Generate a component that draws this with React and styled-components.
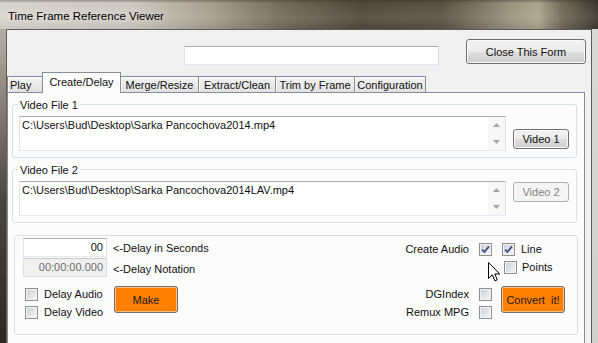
import React from "react";
import styled, { createGlobalStyle } from "styled-components";

const GlobalStyle = createGlobalStyle`
  html, body {
    margin: 0;
    padding: 0;
    background: #2a2622;
  }
  body {
    font-family: "Liberation Sans", Arial, sans-serif;
    font-size: 11px;
    color: #111;
  }
`;

const Frame = styled.div`
  width: 598px;
  height: 343px;
  overflow: hidden;
  display: flex;
  flex-direction: column;
  background: linear-gradient(to bottom, #dadad8, #cfcfcd) right top / 6px 100%
      no-repeat,
    linear-gradient(to bottom, #c4c0b8 0%, #8e867a 28%, #4d463d 58%, #2b2723 100%);
`;

const TitleBar = styled.div`
  flex: none;
  box-sizing: border-box;
  height: 29px;
  padding: 3px 0 0 8px;
  display: flex;
  align-items: center;
  font-size: 11.5px;
  color: #000;
  text-shadow: 0 0 6px rgba(255, 255, 255, 0.7);
  background: linear-gradient(
      to bottom,
      rgba(40, 34, 28, 0.35) 0px,
      rgba(255, 255, 255, 0) 3px,
      rgba(255, 255, 255, 0.08) 60%,
      rgba(0, 0, 0, 0.05) 100%
    ),
    linear-gradient(
      90deg,
      #d7d4ce 0%,
      #cdc8c0 22%,
      #a79e8f 35%,
      #746a5a 47%,
      #51483b 60%,
      #5a5143 74%,
      #9c9580 86%,
      #aaa38d 90%,
      #706856 94%,
      #3e3730 100%
    );
`;

const Client = styled.div`
  flex: 1;
  margin: 0 6px;
  background: #f0f0f0;
  border: 1px solid #5c5c5c;
  border-bottom: none;
  overflow: hidden;
  display: flex;
  flex-direction: column;
`;

const TopRow = styled.div`
  flex: none;
  height: 42px;
  display: flex;
  align-items: flex-start;
`;

const SearchBox = styled.div`
  box-sizing: border-box;
  width: 255px;
  height: 19px;
  margin: 16px 0 0 177px;
  background: #fff;
  border: 1px solid;
  border-color: #abadb3 #dbdfe6 #e3e9ef #e2e3ea;
`;

const Button = styled.button`
  box-sizing: border-box;
  flex: none;
  padding: 0;
  font-family: "Liberation Sans", Arial, sans-serif;
  font-size: 11px;
  color: #111;
  border: 1px solid #707070;
  border-radius: 3px;
  background: linear-gradient(
    to bottom,
    #f2f2f2 0%,
    #ebebeb 50%,
    #dddddd 51%,
    #cfcfcf 100%
  );
  box-shadow: inset 0 0 0 1px #fbfbfb;
`;

const CloseButton = styled(Button)`
  width: 120px;
  height: 25px;
  margin: 9px 0 0 27px;
`;

const VideoButton = styled(Button)`
  width: 56px;
  height: 20px;
  margin: ${(p) => p.$mt}px 0 0 7px;

  &:disabled {
    color: #838383;
    border-color: #adb2b5;
    background: #f4f4f4;
    box-shadow: none;
  }
`;

const OrangeButton = styled(Button)`
  width: 64px;
  height: 27px;
  margin: 1px 0 0 ${(p) => p.$ml || 0}px;
  white-space: pre;
  color: #1a1a1a;
  background: #ff8000;
  box-shadow: inset 0 0 0 1px #ffbd80;
`;

const TabStrip = styled.div`
  flex: none;
  height: 20px;
  display: flex;
  align-items: flex-end;
`;

const Tab = styled.div`
  box-sizing: border-box;
  width: ${(p) => p.$w}px;
  height: ${(p) => (p.$active ? 21 : 16)}px;
  margin-left: ${(p) => (p.$first ? 0 : -1)}px;
  margin-bottom: ${(p) => (p.$active ? -1 : 0)}px;
  padding: ${(p) => (p.$active ? "0 0 2px 0" : "0")};
  padding-left: ${(p) => (p.$left ? "2px" : "0")};
  position: relative;
  z-index: ${(p) => (p.$active ? 2 : 1)};
  display: flex;
  align-items: center;
  justify-content: ${(p) => (p.$left ? "flex-start" : "center")};
  white-space: nowrap;
  border: 1px solid #898c95;
  border-bottom: none;
  background: ${(p) =>
    p.$active ? "#fcfcfc" : "linear-gradient(to bottom, #f3f3f3, #e1e1e1)"};
  box-shadow: ${(p) => (p.$active ? "none" : "inset 1px 1px 0 #fbfbfb")};
`;

const TabPage = styled.div`
  flex: none;
  height: 262px;
  margin-right: 6px;
  background: #fcfcfc;
  border: 1px solid #898c95;
  display: flex;
  flex-direction: column;
`;

const GroupBox = styled.div`
  position: relative;
  flex: none;
  margin: ${(p) => p.$mt}px ${(p) => p.$mr}px 0 ${(p) => p.$ml}px;
  border: 1px solid #d5dfe5;
  border-radius: 3px;
  box-shadow: inset 1px 1px 0 #fff;
`;

const Legend = styled.span`
  position: absolute;
  top: -7px;
  left: 5px;
  padding: 0 2px;
  line-height: 14px;
  background: #fcfcfc;
`;

const FileRow = styled.div`
  display: flex;
  align-items: flex-start;
  padding: 11px 0 6px 6px;
`;

const PathArea = styled.div`
  box-sizing: border-box;
  width: 487px;
  height: 35px;
  display: flex;
  background: #fff;
  border: 1px solid;
  border-color: #abadb3 #dbdfe6 #e3e9ef #e2e3ea;
`;

const PathText = styled.div`
  flex: 1;
  padding: 2px 0 0 2px;
  line-height: 13px;
  white-space: nowrap;
  overflow: hidden;
`;

const ScrollBar = styled.div`
  width: 17px;
  display: flex;
  flex-direction: column;
  background: #f7f7f7;
`;

const ScrollButton = styled.div`
  flex: 1;
  display: flex;
  align-items: center;
  justify-content: center;
`;

const DelayPanel = styled.div`
  display: flex;
  align-items: flex-start;
  padding: 2px 12px 13px 8px;
`;

const LeftCol = styled.div`
  display: flex;
  flex-direction: column;
`;

const FieldRow = styled.div`
  display: flex;
  align-items: center;
  margin-top: ${(p) => p.$mt || 0}px;
`;

const NumBox = styled.div`
  box-sizing: border-box;
  width: 84px;
  height: 19px;
  padding-right: 3px;
  line-height: 17px;
  text-align: right;
  color: ${(p) => (p.$disabled ? "#6d6d6d" : "#111")};
  background: ${(p) => (p.$disabled ? "#f0f0f0" : "#fff")};
  border: 1px solid;
  border-color: ${(p) =>
    p.$disabled ? "#c9c9c9 #dcdcdc #dcdcdc #dcdcdc" : "#abadb3 #dbdfe6 #e3e9ef #e2e3ea"};
`;

const FieldLabel = styled.span`
  margin-left: 6px;
  padding-top: ${(p) => p.$pt || 0}px;
  white-space: nowrap;
`;

const ActionRow = styled.div`
  display: flex;
  align-items: flex-start;
  margin-top: 8px;
`;

const CheckList = styled.div`
  width: 89px;
  margin-left: 2px;
  display: flex;
  flex-direction: column;
`;

const CheckRow = styled.label`
  height: 18px;
  display: flex;
  align-items: center;
  gap: ${(p) => p.$gap || 5}px;
  margin-left: ${(p) => p.$ml || 0}px;
  white-space: nowrap;
`;

const CheckCell = styled.div`
  height: 18px;
  display: flex;
  align-items: center;
  margin-left: 10px;
`;

const Box = styled.span`
  box-sizing: border-box;
  flex: none;
  width: 13px;
  height: 13px;
  display: flex;
  align-items: center;
  justify-content: center;
  border: 1px solid #8f8f8f;
  background: linear-gradient(135deg, #c9cdd3 0%, #e6e7e9 60%, #f7f7f7 100%);
  box-shadow: inset 0 0 0 1px #f4f4f4;
`;

const RightPanel = styled.div`
  position: relative;
  margin-left: auto;
  padding-top: 2px;
  display: flex;
  flex-direction: column;
  align-items: flex-start;
`;

const Block = styled.div`
  display: flex;
  align-items: flex-start;
  margin-top: ${(p) => p.$mt || 0}px;
`;

const Stack = styled.div`
  display: flex;
  flex-direction: column;
  margin-left: ${(p) => p.$ml || 0}px;
`;

const SideLabel = styled.span`
  width: 80px;
  height: 18px;
  line-height: 18px;
  text-align: right;
  white-space: nowrap;
`;

const Cursor = styled.svg`
  position: absolute;
  left: 99px;
  top: 24px;
  pointer-events: none;
`;

function CheckBox({ checked }) {
  return (
    <Box>
      {checked && (
        <svg width="9" height="9" viewBox="0 0 9 9">
          <path
            d="M1 4.6 L3.4 7 L8 1.4"
            fill="none"
            stroke="#3b4d8c"
            strokeWidth="1.8"
          />
        </svg>
      )}
    </Box>
  );
}

function Arrow({ up }) {
  return (
    <svg width="7" height="4" viewBox="0 0 7 4">
      <path d={up ? "M0 4 L3.5 0 L7 4 Z" : "M0 0 L3.5 4 L7 0 Z"} fill="#a8a8a8" />
    </svg>
  );
}

function FileGroup({ title, path, button, disabled, mt, buttonTop }) {
  return (
    <GroupBox $mt={mt} $mr={7} $ml={4}>
      <Legend>{title}</Legend>
      <FileRow>
        <PathArea>
          <PathText>{path}</PathText>
          <ScrollBar>
            <ScrollButton>
              <Arrow up />
            </ScrollButton>
            <ScrollButton>
              <Arrow />
            </ScrollButton>
          </ScrollBar>
        </PathArea>
        <VideoButton $mt={buttonTop} disabled={disabled}>
          {button}
        </VideoButton>
      </FileRow>
    </GroupBox>
  );
}

const tabs = [
  { label: "Play", w: 36, left: true },
  { label: "Create/Delay", w: 79, active: true },
  { label: "Merge/Resize", w: 79 },
  { label: "Extract/Clean", w: 78 },
  { label: "Trim by Frame", w: 80 },
  { label: "Configuration", w: 72 },
];

export default function App() {
  return (
    <>
      <GlobalStyle />
      <Frame>
        <TitleBar>Time Frame Reference Viewer</TitleBar>
        <Client>
          <TopRow>
            <SearchBox />
            <CloseButton>Close This Form</CloseButton>
          </TopRow>
          <TabStrip>
            {tabs.map((t, i) => (
              <Tab
                key={t.label}
                $w={t.w}
                $first={i === 0}
                $active={t.active}
                $left={t.left}
              >
                {t.label}
              </Tab>
            ))}
          </TabStrip>
          <TabPage>
            <FileGroup
              mt={11}
              title="Video File 1"
              path="C:\Users\Bud\Desktop\Sarka Pancochova2014.mp4"
              button="Video 1"
              buttonTop={13}
            />
            <FileGroup
              mt={11}
              title="Video File 2"
              path="C:\Users\Bud\Desktop\Sarka Pancochova2014LAV.mp4"
              button="Video 2"
              buttonTop={1}
              disabled
            />
            <GroupBox $mt={12} $mr={6} $ml={6}>
              <DelayPanel>
                <LeftCol>
                  <FieldRow>
                    <NumBox>00</NumBox>
                    <FieldLabel>&lt;-Delay in Seconds</FieldLabel>
                  </FieldRow>
                  <FieldRow $mt={1}>
                    <NumBox $disabled>00:00:00.000</NumBox>
                    <FieldLabel $pt={2}>&lt;-Delay Notation</FieldLabel>
                  </FieldRow>
                  <ActionRow>
                    <CheckList>
                      <CheckRow $gap={6}>
                        <CheckBox />
                        Delay Audio
                      </CheckRow>
                      <CheckRow $gap={6}>
                        <CheckBox />
                        Delay Video
                      </CheckRow>
                    </CheckList>
                    <OrangeButton>Make</OrangeButton>
                  </ActionRow>
                </LeftCol>
                <RightPanel>
                  <Block>
                    <SideLabel>Create Audio</SideLabel>
                    <CheckCell>
                      <CheckBox checked />
                    </CheckCell>
                    <Stack $ml={10}>
                      <CheckRow $gap={6}>
                        <CheckBox checked />
                        Line
                      </CheckRow>
                      <CheckRow $gap={5} $ml={2}>
                        <CheckBox />
                        Points
                      </CheckRow>
                    </Stack>
                  </Block>
                  <Block $mt={9}>
                    <Stack>
                      <Block>
                        <SideLabel>DGIndex</SideLabel>
                        <CheckCell>
                          <CheckBox />
                        </CheckCell>
                      </Block>
                      <Block>
                        <SideLabel>Remux MPG</SideLabel>
                        <CheckCell>
                          <CheckBox />
                        </CheckCell>
                      </Block>
                    </Stack>
                    <OrangeButton $ml={9}>{"Convert  it!"}</OrangeButton>
                  </Block>
                  <Cursor width="13" height="20" viewBox="0 0 13 20">
                    <path
                      d="M0.5 0.5 L0.5 16.5 L4.3 12.8 L6.9 18.8 L9.3 17.8 L6.8 12 L11.8 12 Z"
                      fill="#fff"
                      stroke="#000"
                      strokeWidth="1"
                      strokeLinejoin="miter"
                    />
                  </Cursor>
                </RightPanel>
              </DelayPanel>
            </GroupBox>
          </TabPage>
        </Client>
      </Frame>
    </>
  );
}
